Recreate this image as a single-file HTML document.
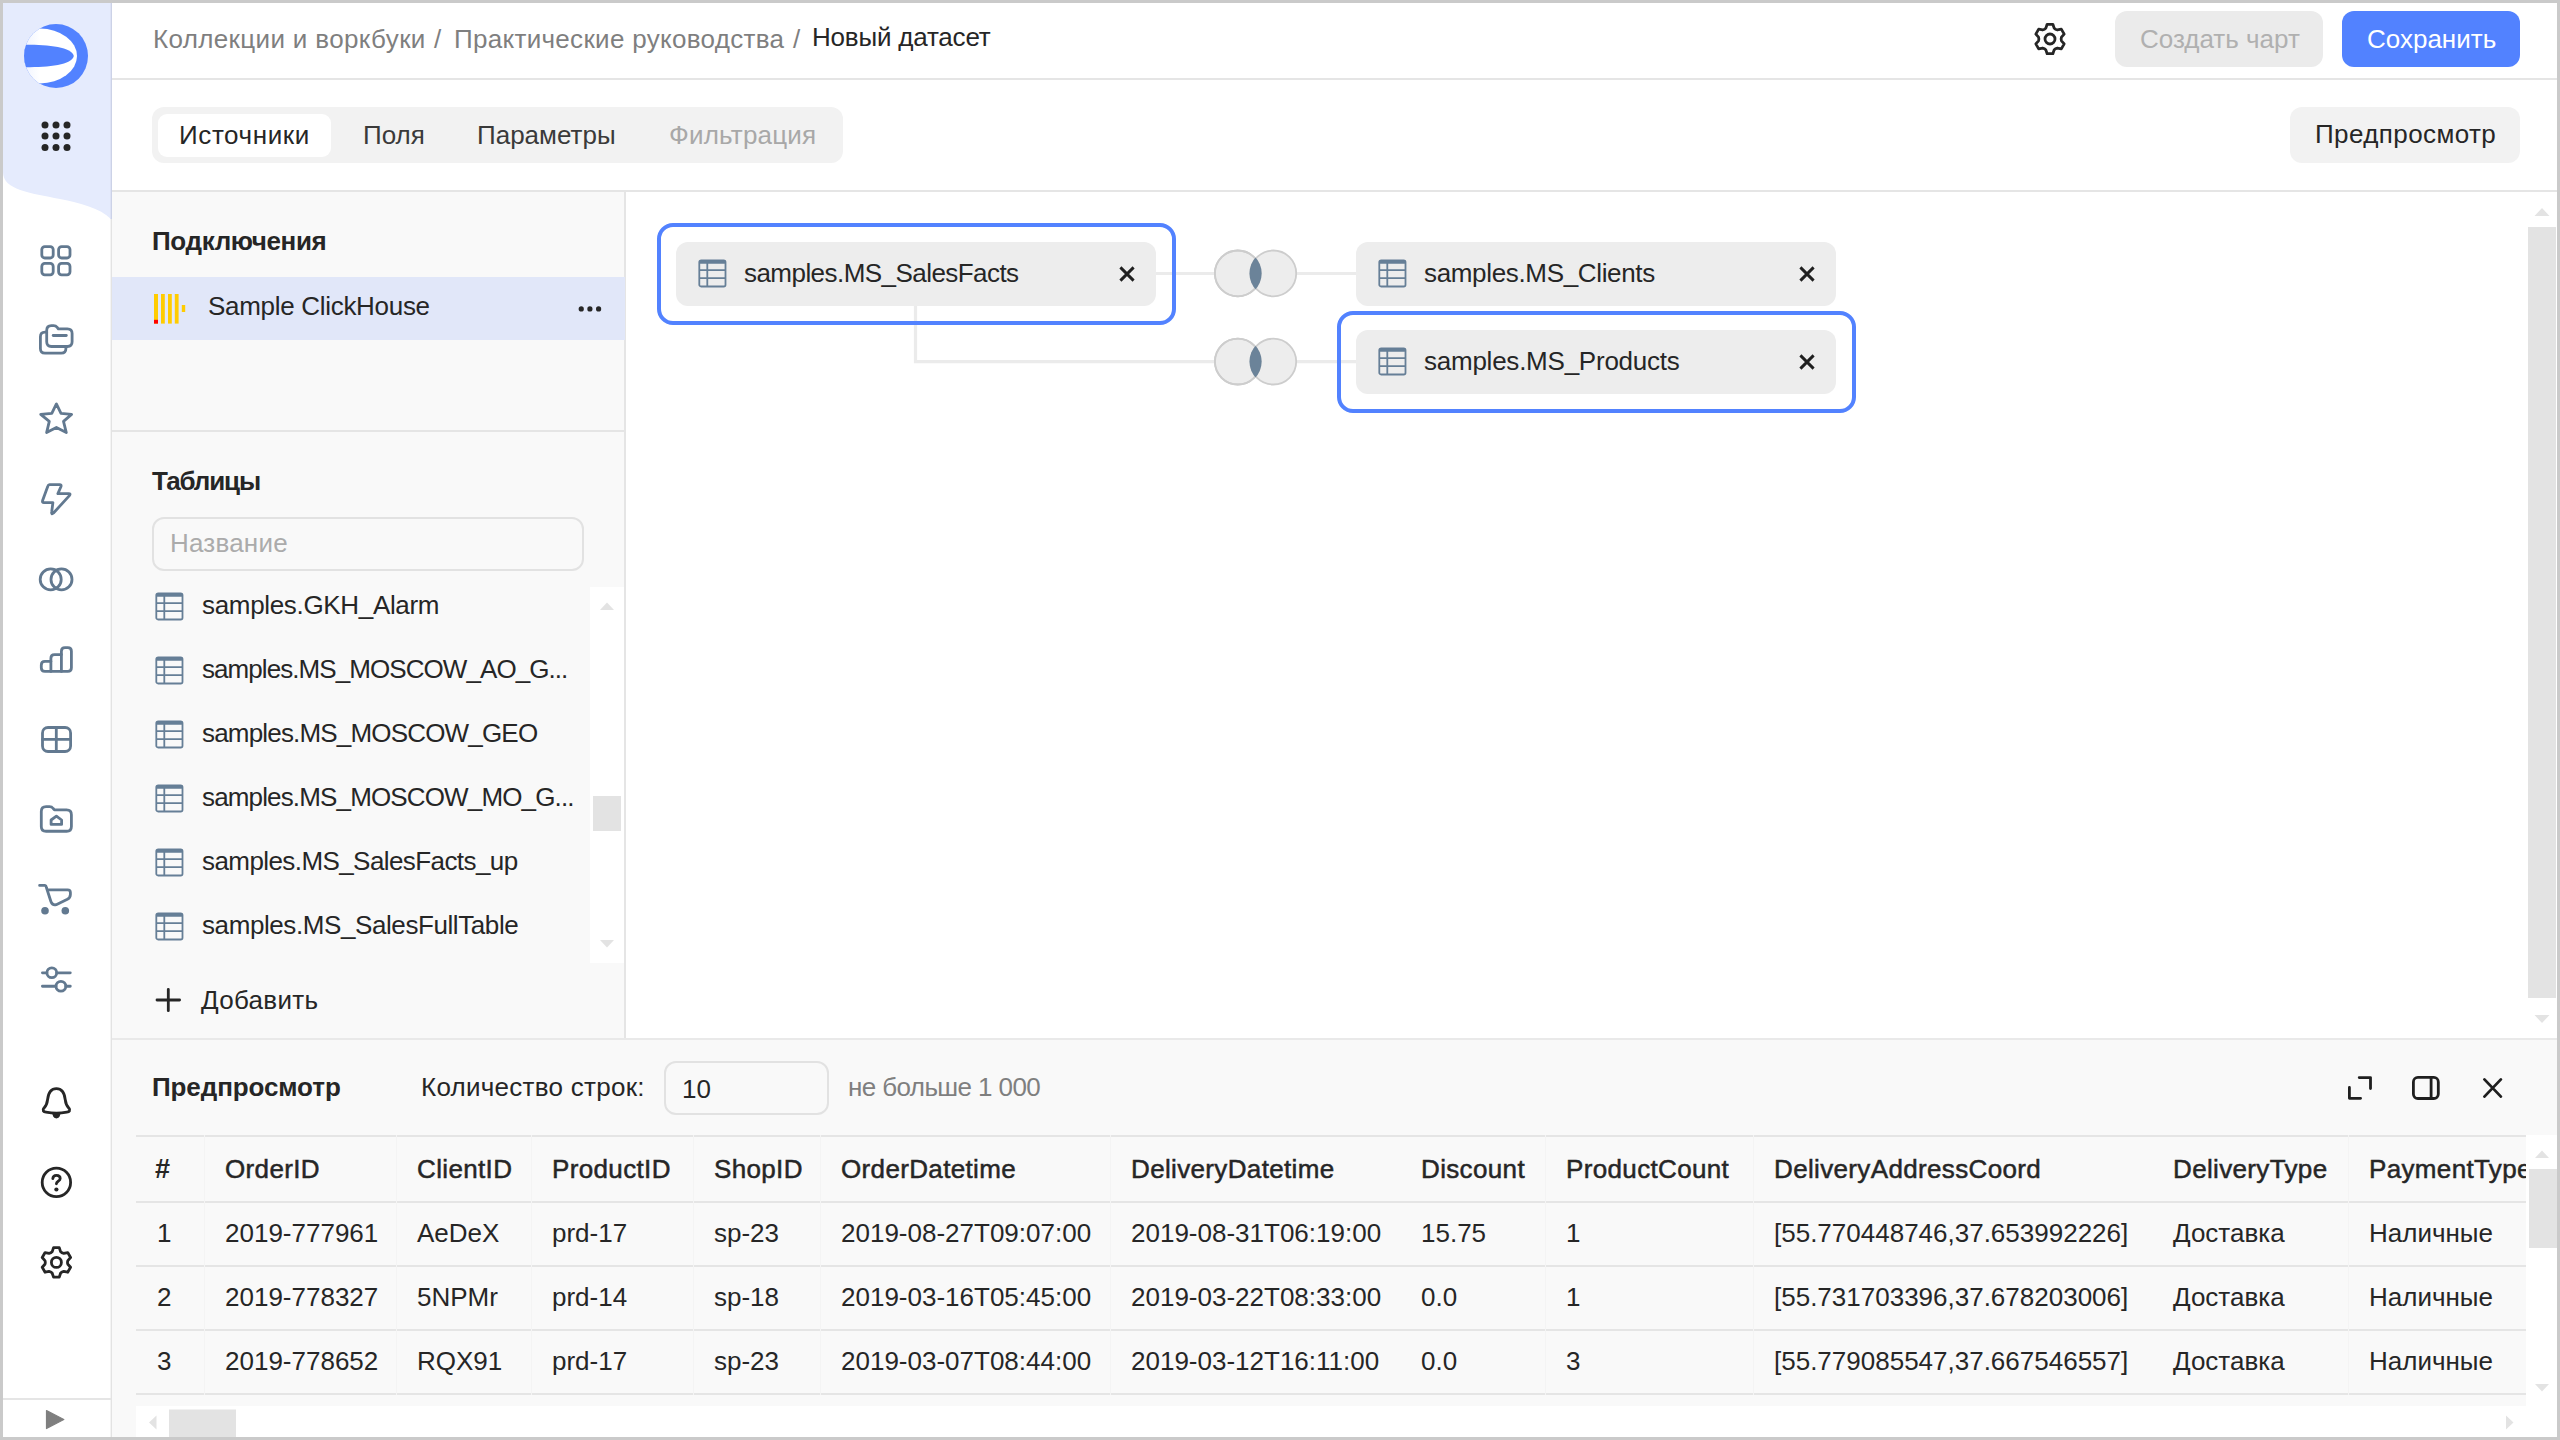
<!DOCTYPE html>
<html><head><meta charset="utf-8">
<style>
*{box-sizing:border-box;margin:0;padding:0}
html,body{width:2560px;height:1440px;overflow:hidden;background:#fff}
body{font-family:"Liberation Sans",sans-serif;font-size:26px;color:#262626;position:relative}
.a{position:absolute}
.t{position:absolute;white-space:nowrap;line-height:36px;height:36px}
.frame{position:absolute;left:0;top:0;width:2560px;height:1440px;border:3px solid #cacaca;z-index:100;pointer-events:none}
.hl{position:absolute;height:2px;background:#e8e8e8}
.vl{position:absolute;width:2px;background:#e8e8e8}
.ico{position:absolute}
.b{font-weight:bold}
.sec{color:#7f7f7f}
.th{-webkit-text-stroke:0.5px #262626;letter-spacing:0.35px}
</style></head><body>
<div class="frame"></div>
<!-- SIDEBAR -->
<svg class="a" style="left:0;top:0" width="112" height="1440" viewBox="0 0 112 1440">
  <defs>
    <clipPath id="lc"><circle cx="56" cy="56" r="32"/></clipPath>
    <linearGradient id="lg" x1="0" x2="1" y1="0" y2="0">
      <stop offset="0" stop-color="#dbe4fd"/><stop offset="0.5" stop-color="#ffffff"/>
    </linearGradient>
  </defs>
  <path d="M3 3 H111 V219 C 100 208, 80 203, 60 199 C 30 193, 3 190, 3 172 Z" fill="#e5ebfd"/>
  <circle cx="56" cy="56" r="32" fill="#5282ff"/>
  <g clip-path="url(#lc)">
    <ellipse cx="40" cy="56" rx="37" ry="27.4" fill="url(#lg)"/>
    <path d="M20 44.8 C 45 44.4, 72 46.5, 73.8 56 C 72 65.5, 45 67.6, 20 67.2 Z" fill="#5282ff"/>
  </g>
  <g fill="#262626">
    <circle cx="45" cy="125" r="3.5"/><circle cx="56" cy="125" r="3.5"/><circle cx="67" cy="125" r="3.5"/>
    <circle cx="45" cy="136" r="3.5"/><circle cx="56" cy="136" r="3.5"/><circle cx="67" cy="136" r="3.5"/>
    <circle cx="45" cy="147.5" r="3.5"/><circle cx="56" cy="147.5" r="3.5"/><circle cx="67" cy="147.5" r="3.5"/>
  </g>
  <g fill="none" stroke="#627990" stroke-width="2.8" stroke-linecap="round" stroke-linejoin="round">
    <!-- dashboards grid -->
    <rect x="41.8" y="246.6" width="11.4" height="11.4" rx="3"/>
    <rect x="58.6" y="246.6" width="11.4" height="11.4" rx="3"/>
    <rect x="41.8" y="263.4" width="11.4" height="11.4" rx="3"/>
    <rect x="58.6" y="263.4" width="11.4" height="11.4" rx="3"/>
    <!-- collections -->
    <path d="M46.7 330.5 Q46.7 325.6 51.3 325.6 H53.6 Q55.8 325.6 57.2 327.4 L58.3 328.8 H67.4 Q72.1 328.8 72.1 333.4 V341.8 Q72.1 346.5 67.4 346.5 H51.4 Q46.7 346.5 46.7 341.8 Z"/>
    <path d="M53.2 335.5 H66.3"/>
    <path d="M46.7 332.2 H45 Q40.4 332.2 40.4 336.8 V348.6 Q40.4 353.2 45 353.2 H61.3 Q65.9 353.2 65.9 348.6 V346.5"/>
    <!-- star -->
    <path d="M56.4 403.9 L51.8 413.3 L40.7 414.4 L49.3 421.4 L46.6 432.6 L56.4 427.5 L66.3 432.6 L63.5 421.4 L71.6 414.4 L61 413.3 Z"/>
    <!-- lightning -->
    <path d="M49.5 484.6 H59.6 Q61.6 484.6 61 486.5 L57.9 493.6 H68.6 Q71 493.6 69.4 495.6 L53.5 513 Q51.2 515 51.7 512 L52.9 502.6 H44 Q42 502.6 42.6 500.6 L47.8 486.2 Q48.3 484.6 49.5 484.6 Z"/>
    <!-- two circles -->
    <circle cx="50.7" cy="579.4" r="10.5"/>
    <circle cx="61.5" cy="579.4" r="10.5"/>
    <!-- bars -->
    <path d="M41.3 665 Q41.3 661.4 44.9 661.4 H50.9 V658.2 Q50.9 654.6 54.5 654.6 H61.4 V651.2 Q61.4 647.6 65 647.6 H67.8 Q71.4 647.6 71.4 651.2 V667.8 Q71.4 671.4 67.8 671.4 H44.9 Q41.3 671.4 41.3 667.8 Z"/>
    <path d="M50.9 661.4 V671.4 M61.4 654.6 V671.4"/>
    <!-- grid cross -->
    <rect x="42.5" y="727.5" width="28.1" height="24" rx="5.5"/>
    <path d="M56.3 727.5 V751.5 M42.5 739.4 H70.6"/>
    <!-- folder home -->
    <path d="M41.3 811.5 Q41.3 806.7 46.1 806.7 H49.5 Q51.8 806.7 53.2 808.5 L54.4 809.9 H66.6 Q71.4 809.9 71.4 814.7 V826.4 Q71.4 831.25 66.6 831.25 H46.1 Q41.3 831.25 41.3 826.4 Z"/>
    <path d="M56.4 816.1 L51.1 820 V824.4 H61.6 V820 Z"/>
    <!-- cart -->
    <path d="M39.6 885.4 H44.6 Q45.9 885.4 46.4 887.5 L50.9 901.5 Q52.5 905.8 56.2 904.7 L66.9 899.6 Q70.4 897.8 70.4 894.5 V892.4 Q70.4 889.9 67.6 889.9 H47.4"/>
    <!-- sliders -->
    <path d="M42.4 972.8 H46.9 M56.7 972.8 H70.3 M42.4 986.25 H56 M65.8 986.25 H70.3"/>
    <circle cx="51.8" cy="972.8" r="4.9"/>
    <circle cx="60.9" cy="986.25" r="4.9"/>
  </g>
  <g fill="#627990"><circle cx="45" cy="910.8" r="3.8"/><circle cx="65.3" cy="910.8" r="3.8"/></g>
  <g fill="none" stroke="#262626" stroke-width="2.8" stroke-linecap="round" stroke-linejoin="round">
    <!-- bell -->
    <path d="M56.4 1088.7 C 50 1088.7 48.2 1094 47.6 1099.5 C 47 1105 45.5 1106.5 43.8 1108.3 C 42 1110.3 43.5 1111.9 46 1112.2 C 52 1113.2 60.8 1113.2 66.8 1112.2 C 69.3 1111.9 70.8 1110.3 69 1108.3 C 67.3 1106.5 65.8 1105 65.2 1099.5 C 64.6 1094 62.8 1088.7 56.4 1088.7 Z"/>
    <!-- help -->
    <circle cx="56.4" cy="1182.4" r="14.2"/>
    <path d="M52.8 1178.6 C 53 1176.4 54.6 1175.3 56.4 1175.3 C 58.6 1175.3 60.2 1176.6 60.2 1178.4 C 60.2 1181 56.4 1181.2 56.4 1183.8"/>
    <!-- gear -->
    <path transform="translate(56.4 1262.4)" d="M-4.16 -10.83 L-2.86 -14.72 L2.86 -14.72 L4.16 -10.83 A 5.00 5.00 0 0 0 7.30 -9.01 L11.32 -9.84 L14.18 -4.88 L11.46 -1.81 A 5.00 5.00 0 0 0 11.46 1.81 L14.18 4.88 L11.32 9.84 L7.30 9.01 A 5.00 5.00 0 0 0 4.16 10.83 L2.86 14.72 L-2.86 14.72 L-4.16 10.83 A 5.00 5.00 0 0 0 -7.30 9.01 L-11.32 9.84 L-14.18 4.88 L-11.46 1.81 A 5.00 5.00 0 0 0 -11.46 -1.81 L-14.18 -4.88 L-11.32 -9.84 L-7.30 -9.01 A 5.00 5.00 0 0 0 -4.16 -10.83 Z"/>
    <circle cx="56.4" cy="1262.4" r="5"/>
  </g>
  <g fill="#262626">
    <path d="M51.8 1112.4 H61 L59.6 1116.6 Q59 1118.4 56.4 1118.4 Q53.8 1118.4 53.2 1116.6 Z"/>
    <circle cx="56.4" cy="1189.5" r="2.1"/>
  </g>
  <path d="M46.5 1410.5 L63.8 1419.5 L46.5 1428.5 Z" fill="#7f7f7f" stroke="#7f7f7f" stroke-width="1.2" stroke-linejoin="round"/>
</svg>
<div class="a" style="left:110px;top:3px;width:1px;height:216px;background:#dde2f5"></div>
<div class="a" style="left:111px;top:3px;width:1px;height:216px;background:#ccd2e7"></div>
<div class="a" style="left:110px;top:219px;width:1px;height:1218px;background:#f4f4f4"></div>
<div class="a" style="left:111px;top:219px;width:1px;height:1218px;background:#e3e3e3"></div>
<div class="a" style="left:3px;top:1398px;width:108px;height:2px;background:#e5e5e5"></div>

<!-- HEADER -->
<div class="a" style="left:112px;top:78px;width:2445px;height:2px;background:#e5e5e5"></div>
<div class="t sec" style="left:153px;top:21px;letter-spacing:0.35px">Коллекции и воркбуки</div>
<div class="t sec" style="left:434px;top:21px">/</div>
<div class="t sec" style="left:454px;top:21px;letter-spacing:0.3px">Практические руководства</div>
<div class="t sec" style="left:793px;top:21px">/</div>
<div class="t" style="left:812px;top:19px;letter-spacing:-0.2px">Новый датасет</div>
<svg class="a" style="left:2030px;top:19px" width="40" height="40" viewBox="-20 -20 40 40">
  <g fill="none" stroke="#262626" stroke-width="2.8" stroke-linejoin="round">
    <path d="M-4.16 -10.83 L-2.86 -14.72 L2.86 -14.72 L4.16 -10.83 A 5.00 5.00 0 0 0 7.30 -9.01 L11.32 -9.84 L14.18 -4.88 L11.46 -1.81 A 5.00 5.00 0 0 0 11.46 1.81 L14.18 4.88 L11.32 9.84 L7.30 9.01 A 5.00 5.00 0 0 0 4.16 10.83 L2.86 14.72 L-2.86 14.72 L-4.16 10.83 A 5.00 5.00 0 0 0 -7.30 9.01 L-11.32 9.84 L-14.18 4.88 L-11.46 1.81 A 5.00 5.00 0 0 0 -11.46 -1.81 L-14.18 -4.88 L-11.32 -9.84 L-7.30 -9.01 A 5.00 5.00 0 0 0 -4.16 -10.83 Z"/>
    <circle cx="0" cy="0" r="5"/>
  </g>
</svg>
<div class="a" style="left:2115px;top:11px;width:208px;height:56px;border-radius:12px;background:#ebebeb"></div>
<div class="t" style="left:2140px;top:21px;color:#b0b0b0">Создать чарт</div>
<div class="a" style="left:2342px;top:11px;width:178px;height:56px;border-radius:12px;background:#5282ff"></div>
<div class="t" style="left:2367px;top:21px;color:#fff">Сохранить</div>

<!-- TABS -->
<div class="a" style="left:112px;top:190px;width:2445px;height:2px;background:#e5e5e5"></div>
<div class="a" style="left:152px;top:107px;width:691px;height:56px;border-radius:12px;background:#f2f2f2"></div>
<div class="a" style="left:158px;top:114px;width:173px;height:43px;border-radius:9px;background:#fff"></div>
<div class="t" style="left:179px;top:117px;letter-spacing:0.6px">Источники</div>
<div class="t" style="left:363px;top:117px;color:#3a3a3a">Поля</div>
<div class="t" style="left:477px;top:117px;color:#3a3a3a">Параметры</div>
<div class="t" style="left:669px;top:117px;color:#a8a8a8;letter-spacing:0.2px">Фильтрация</div>
<div class="a" style="left:2290px;top:107px;width:230px;height:56px;border-radius:12px;background:#f2f2f2"></div>
<div class="t" style="left:2315px;top:116px;letter-spacing:0.4px">Предпросмотр</div>

<!-- LEFT PANEL -->
<div class="a" style="left:112px;top:192px;width:513px;height:847px;background:#f9f9f9"></div>
<div class="a" style="left:624px;top:192px;width:2px;height:847px;background:#e5e5e5"></div>
<div class="t b" style="left:152px;top:223px;letter-spacing:-0.35px">Подключения</div>
<div class="a" style="left:112px;top:277px;width:513px;height:63px;background:#e1e7f9"></div>
<svg class="a" style="left:146px;top:286px" width="50" height="44" viewBox="146 286 50 44">
  <g fill="#ffcc00"><rect x="154" y="294" width="4" height="29.6"/><rect x="161" y="294" width="3.8" height="29.6"/><rect x="168" y="294" width="3.8" height="29.6"/><rect x="174.8" y="294" width="3.8" height="29.6"/><rect x="181.8" y="305" width="3.4" height="7"/></g>
  <rect x="154" y="319.8" width="4" height="3.8" fill="#ff0000"/>
</svg>
<div class="t" style="left:208px;top:288px;letter-spacing:-0.3px">Sample ClickHouse</div>
<svg class="a" style="left:570px;top:298px" width="40" height="22" viewBox="570 298 40 22">
  <g fill="#262626"><circle cx="581.25" cy="308.9" r="2.6"/><circle cx="589.9" cy="308.9" r="2.6"/><circle cx="598.6" cy="308.9" r="2.6"/></g>
</svg>
<div class="a" style="left:112px;top:430px;width:513px;height:2px;background:#e5e5e5"></div>
<div class="t b" style="left:152px;top:463px;letter-spacing:-1.1px">Таблицы</div>
<div class="a" style="left:152px;top:517px;width:432px;height:54px;border-radius:12px;border:2px solid #e2e2e2;background:#f9f9f9"></div>
<div class="t" style="left:170px;top:525px;color:#ababab;letter-spacing:0.2px">Название</div>

<!-- TABLE LIST -->
<div class="a" style="left:590px;top:587px;width:34px;height:376px;background:#fff"></div>
<div class="a" style="left:593px;top:796px;width:28px;height:35px;background:#e3e3e3"></div>
<svg class="a" style="left:590px;top:587px" width="35" height="376" viewBox="590 587 35 376"><path d="M600 610 L607 602.5 L614 610 Z M600 940 L607 947.5 L614 940 Z" fill="#e3e3e3"/></svg>
<svg class="a" style="left:155px;top:592px" width="29" height="29" viewBox="0 0 29 29"><g fill="none" stroke="#667f97" stroke-width="1.8"><rect x="1.3" y="1.3" width="26.2" height="26.2" rx="1.8"/><path d="M2 11.2 H27 M2 19.2 H27 M9.3 4 V27"/></g><rect x="1.3" y="1.3" width="26.2" height="3.4" rx="1" fill="#667f97"/></svg>
<div class="t" style="left:202px;top:587px;letter-spacing:-0.33px">samples.GKH_Alarm</div>
<svg class="a" style="left:155px;top:656px" width="29" height="29" viewBox="0 0 29 29"><g fill="none" stroke="#667f97" stroke-width="1.8"><rect x="1.3" y="1.3" width="26.2" height="26.2" rx="1.8"/><path d="M2 11.2 H27 M2 19.2 H27 M9.3 4 V27"/></g><rect x="1.3" y="1.3" width="26.2" height="3.4" rx="1" fill="#667f97"/></svg>
<div class="t" style="left:202px;top:651px;letter-spacing:-0.93px">samples.MS_MOSCOW_AO_G...</div>
<svg class="a" style="left:155px;top:720px" width="29" height="29" viewBox="0 0 29 29"><g fill="none" stroke="#667f97" stroke-width="1.8"><rect x="1.3" y="1.3" width="26.2" height="26.2" rx="1.8"/><path d="M2 11.2 H27 M2 19.2 H27 M9.3 4 V27"/></g><rect x="1.3" y="1.3" width="26.2" height="3.4" rx="1" fill="#667f97"/></svg>
<div class="t" style="left:202px;top:715px;letter-spacing:-0.82px">samples.MS_MOSCOW_GEO</div>
<svg class="a" style="left:155px;top:784px" width="29" height="29" viewBox="0 0 29 29"><g fill="none" stroke="#667f97" stroke-width="1.8"><rect x="1.3" y="1.3" width="26.2" height="26.2" rx="1.8"/><path d="M2 11.2 H27 M2 19.2 H27 M9.3 4 V27"/></g><rect x="1.3" y="1.3" width="26.2" height="3.4" rx="1" fill="#667f97"/></svg>
<div class="t" style="left:202px;top:779px;letter-spacing:-0.85px">samples.MS_MOSCOW_MO_G...</div>
<svg class="a" style="left:155px;top:848px" width="29" height="29" viewBox="0 0 29 29"><g fill="none" stroke="#667f97" stroke-width="1.8"><rect x="1.3" y="1.3" width="26.2" height="26.2" rx="1.8"/><path d="M2 11.2 H27 M2 19.2 H27 M9.3 4 V27"/></g><rect x="1.3" y="1.3" width="26.2" height="3.4" rx="1" fill="#667f97"/></svg>
<div class="t" style="left:202px;top:843px;letter-spacing:-0.58px">samples.MS_SalesFacts_up</div>
<svg class="a" style="left:155px;top:912px" width="29" height="29" viewBox="0 0 29 29"><g fill="none" stroke="#667f97" stroke-width="1.8"><rect x="1.3" y="1.3" width="26.2" height="26.2" rx="1.8"/><path d="M2 11.2 H27 M2 19.2 H27 M9.3 4 V27"/></g><rect x="1.3" y="1.3" width="26.2" height="3.4" rx="1" fill="#667f97"/></svg>
<div class="t" style="left:202px;top:907px;letter-spacing:-0.41px">samples.MS_SalesFullTable</div>
<svg class="a" style="left:150px;top:982px" width="36" height="36" viewBox="150 982 36 36"><path d="M168.3 989.3 V1010.7 M157 1000 H179.6" stroke="#262626" stroke-width="2.8" fill="none" stroke-linecap="round"/></svg>
<div class="t" style="left:201px;top:982px;letter-spacing:0.3px">Добавить</div>
<!-- CANVAS -->
<div class="a" style="left:657px;top:223px;width:519px;height:102px;border-radius:16px;background:#fff"></div>
<div class="a" style="left:1337px;top:311px;width:519px;height:102px;border-radius:16px;background:#fff"></div>
<svg class="a" style="left:627px;top:192px" width="1930" height="847" viewBox="627 192 1930 847"><g stroke="#ebebeb" stroke-width="3.2" fill="none"><path d="M1150 273.5 H1360"/><path d="M915.5 300 V361.6 H1360"/></g><defs><clipPath id="c1"><circle cx="1237.8" cy="273.4" r="23.8"/></clipPath><clipPath id="c2"><circle cx="1237.8" cy="361.6" r="23.8"/></clipPath></defs><g fill="#ededed" stroke="#cdcdcd" stroke-width="1.8"><circle cx="1237.8" cy="273.4" r="22.9"/><circle cx="1273.3" cy="273.4" r="22.9"/><circle cx="1237.8" cy="361.6" r="22.9"/><circle cx="1273.3" cy="361.6" r="22.9"/></g><g fill="none" stroke="#cdcdcd" stroke-width="1.8"><circle cx="1237.8" cy="273.4" r="22.9"/><circle cx="1237.8" cy="361.6" r="22.9"/></g><circle cx="1273.3" cy="273.4" r="23.8" fill="#6b8399" clip-path="url(#c1)"/><circle cx="1273.3" cy="361.6" r="23.8" fill="#6b8399" clip-path="url(#c2)"/></svg>
<div class="a" style="left:657px;top:223px;width:519px;height:102px;border:4.5px solid #5282ff;border-radius:16px"></div>
<div class="a" style="left:1337px;top:311px;width:519px;height:102px;border:4.5px solid #5282ff;border-radius:16px"></div>
<div class="a" style="left:676px;top:242px;width:480px;height:64px;border-radius:12px;background:#ededed"></div>
<svg class="a" style="left:698px;top:259px" width="29" height="29" viewBox="0 0 29 29"><g fill="none" stroke="#667f97" stroke-width="1.8"><rect x="1.3" y="1.3" width="26.2" height="26.2" rx="1.8"/><path d="M2 11.2 H27 M2 19.2 H27 M9.3 4 V27"/></g><rect x="1.3" y="1.3" width="26.2" height="3.4" rx="1" fill="#667f97"/></svg>
<div class="t" style="left:744px;top:255px;letter-spacing:-0.55px">samples.MS_SalesFacts</div>
<svg class="a" style="left:1117px;top:264px" width="20" height="20" viewBox="-10 -10 20 20"><path d="M-6.6 -6.6 L6.6 6.6 M6.6 -6.6 L-6.6 6.6" stroke="#1f1f1f" stroke-width="2.9" fill="none"/></svg>
<div class="a" style="left:1356px;top:242px;width:480px;height:64px;border-radius:12px;background:#ededed"></div>
<svg class="a" style="left:1378px;top:259px" width="29" height="29" viewBox="0 0 29 29"><g fill="none" stroke="#667f97" stroke-width="1.8"><rect x="1.3" y="1.3" width="26.2" height="26.2" rx="1.8"/><path d="M2 11.2 H27 M2 19.2 H27 M9.3 4 V27"/></g><rect x="1.3" y="1.3" width="26.2" height="3.4" rx="1" fill="#667f97"/></svg>
<div class="t" style="left:1424px;top:255px;letter-spacing:-0.34px">samples.MS_Clients</div>
<svg class="a" style="left:1797px;top:264px" width="20" height="20" viewBox="-10 -10 20 20"><path d="M-6.6 -6.6 L6.6 6.6 M6.6 -6.6 L-6.6 6.6" stroke="#1f1f1f" stroke-width="2.9" fill="none"/></svg>
<div class="a" style="left:1356px;top:330px;width:480px;height:64px;border-radius:12px;background:#ededed"></div>
<svg class="a" style="left:1378px;top:347px" width="29" height="29" viewBox="0 0 29 29"><g fill="none" stroke="#667f97" stroke-width="1.8"><rect x="1.3" y="1.3" width="26.2" height="26.2" rx="1.8"/><path d="M2 11.2 H27 M2 19.2 H27 M9.3 4 V27"/></g><rect x="1.3" y="1.3" width="26.2" height="3.4" rx="1" fill="#667f97"/></svg>
<div class="t" style="left:1424px;top:343px;letter-spacing:-0.24px">samples.MS_Products</div>
<svg class="a" style="left:1797px;top:352px" width="20" height="20" viewBox="-10 -10 20 20"><path d="M-6.6 -6.6 L6.6 6.6 M6.6 -6.6 L-6.6 6.6" stroke="#1f1f1f" stroke-width="2.9" fill="none"/></svg>
<svg class="a" style="left:2526px;top:192px" width="31" height="847" viewBox="2526 192 31 847"><rect x="2528" y="227" width="28" height="771" fill="#e3e3e3"/><path d="M2534.5 216 L2542 208 L2549.5 216 Z M2534.5 1015 L2542 1023 L2549.5 1015 Z" fill="#e3e3e3"/></svg>
<!-- PREVIEW -->
<div class="a" style="left:112px;top:1038px;width:2445px;height:399px;background:#f9f9f9"></div>
<div class="a" style="left:112px;top:1038px;width:2445px;height:2px;background:#e9e9e9"></div>
<div class="t b" style="left:152px;top:1069px;letter-spacing:-0.1px">Предпросмотр</div>
<div class="t" style="left:421px;top:1069px;letter-spacing:0.27px">Количество строк:</div>
<div class="a" style="left:664px;top:1061px;width:165px;height:54px;border-radius:12px;border:2px solid #e2e2e2;background:#f9f9f9"></div>
<div class="t" style="left:682px;top:1071px">10</div>
<div class="t sec" style="left:848px;top:1069px;letter-spacing:-0.6px">не больше 1 000</div>
<svg class="a" style="left:2336px;top:1066px" width="180" height="44" viewBox="2336 1066 180 44"><g fill="none" stroke="#1f1f1f" stroke-width="2.8" stroke-linecap="round" stroke-linejoin="round"><path d="M2359.2 1077.6 H2370.5 V1088.5 M2349.4 1087.4 V1098.3 H2360.6"/><rect x="2413.4" y="1077.4" width="24.9" height="21.1" rx="4.5"/><path d="M2431.1 1077.4 V1098.5"/><path d="M2484.4 1079.4 L2500.9 1096.6 M2500.9 1079.4 L2484.4 1096.6"/></g></svg>
<div class="a" style="left:136px;top:1135px;width:2390px;height:271px;overflow:hidden">
<div class="a" style="left:0;top:0px;width:2390px;height:2px;background:#e5e5e5"></div>
<div class="a" style="left:0;top:66px;width:2390px;height:2px;background:#e5e5e5"></div>
<div class="a" style="left:0;top:130px;width:2390px;height:2px;background:#e5e5e5"></div>
<div class="a" style="left:0;top:194px;width:2390px;height:2px;background:#e5e5e5"></div>
<div class="a" style="left:0;top:258px;width:2390px;height:2px;background:#e5e5e5"></div>
<div class="a" style="left:68px;top:0;width:1px;height:260px;background:#f4f4f4"></div>
<div class="a" style="left:260px;top:0;width:1px;height:260px;background:#f4f4f4"></div>
<div class="a" style="left:395px;top:0;width:1px;height:260px;background:#f4f4f4"></div>
<div class="a" style="left:557px;top:0;width:1px;height:260px;background:#f4f4f4"></div>
<div class="a" style="left:684px;top:0;width:1px;height:260px;background:#f4f4f4"></div>
<div class="a" style="left:974px;top:0;width:1px;height:260px;background:#f4f4f4"></div>
<div class="a" style="left:1409px;top:0;width:1px;height:260px;background:#f4f4f4"></div>
<div class="a" style="left:1617px;top:0;width:1px;height:260px;background:#f4f4f4"></div>
<div class="a" style="left:2212px;top:0;width:1px;height:260px;background:#f4f4f4"></div>
<div class="t" style="left:19px;top:16px;font-weight:bold;font-size:27px">#</div>
<div class="t th" style="left:89px;top:16px">OrderID</div>
<div class="t th" style="left:281px;top:16px">ClientID</div>
<div class="t th" style="left:416px;top:16px">ProductID</div>
<div class="t th" style="left:578px;top:16px">ShopID</div>
<div class="t th" style="left:705px;top:16px">OrderDatetime</div>
<div class="t th" style="left:995px;top:16px">DeliveryDatetime</div>
<div class="t th" style="left:1285px;top:16px">Discount</div>
<div class="t th" style="left:1430px;top:16px">ProductCount</div>
<div class="t th" style="left:1638px;top:16px">DeliveryAddressCoord</div>
<div class="t th" style="left:2037px;top:16px">DeliveryType</div>
<div class="t th" style="left:2233px;top:16px">PaymentType</div>
<div class="t" style="left:21px;top:80px">1</div>
<div class="t" style="left:89px;top:80px">2019-777961</div>
<div class="t" style="left:281px;top:80px">AeDeX</div>
<div class="t" style="left:416px;top:80px">prd-17</div>
<div class="t" style="left:578px;top:80px">sp-23</div>
<div class="t" style="left:705px;top:80px">2019-08-27T09:07:00</div>
<div class="t" style="left:995px;top:80px">2019-08-31T06:19:00</div>
<div class="t" style="left:1285px;top:80px">15.75</div>
<div class="t" style="left:1430px;top:80px">1</div>
<div class="t" style="left:1638px;top:80px">[55.770448746,37.653992226]</div>
<div class="t" style="left:2037px;top:80px">Доставка</div>
<div class="t" style="left:2233px;top:80px">Наличные</div>
<div class="t" style="left:21px;top:144px">2</div>
<div class="t" style="left:89px;top:144px">2019-778327</div>
<div class="t" style="left:281px;top:144px">5NPMr</div>
<div class="t" style="left:416px;top:144px">prd-14</div>
<div class="t" style="left:578px;top:144px">sp-18</div>
<div class="t" style="left:705px;top:144px">2019-03-16T05:45:00</div>
<div class="t" style="left:995px;top:144px">2019-03-22T08:33:00</div>
<div class="t" style="left:1285px;top:144px">0.0</div>
<div class="t" style="left:1430px;top:144px">1</div>
<div class="t" style="left:1638px;top:144px">[55.731703396,37.678203006]</div>
<div class="t" style="left:2037px;top:144px">Доставка</div>
<div class="t" style="left:2233px;top:144px">Наличные</div>
<div class="t" style="left:21px;top:208px">3</div>
<div class="t" style="left:89px;top:208px">2019-778652</div>
<div class="t" style="left:281px;top:208px">RQX91</div>
<div class="t" style="left:416px;top:208px">prd-17</div>
<div class="t" style="left:578px;top:208px">sp-23</div>
<div class="t" style="left:705px;top:208px">2019-03-07T08:44:00</div>
<div class="t" style="left:995px;top:208px">2019-03-12T16:11:00</div>
<div class="t" style="left:1285px;top:208px">0.0</div>
<div class="t" style="left:1430px;top:208px">3</div>
<div class="t" style="left:1638px;top:208px">[55.779085547,37.667546557]</div>
<div class="t" style="left:2037px;top:208px">Доставка</div>
<div class="t" style="left:2233px;top:208px">Наличные</div>
</div>
<svg class="a" style="left:2526px;top:1135px" width="31" height="302" viewBox="2526 1135 31 302"><rect x="2526" y="1135" width="31" height="302" fill="#fff"/><rect x="2529" y="1169" width="28" height="79" fill="#e3e3e3"/><path d="M2535 1158 L2542 1150.5 L2549 1158 Z M2535 1384 L2542 1391.5 L2549 1384 Z" fill="#e3e3e3"/></svg>
<svg class="a" style="left:136px;top:1406px" width="2390" height="31" viewBox="136 1406 2390 31"><rect x="136" y="1406" width="2390" height="31" fill="#fff"/><rect x="169" y="1409.5" width="67" height="27.5" fill="#e3e3e3"/><path d="M156.5 1415.5 L149 1422.5 L156.5 1429.5 Z M2506 1415.5 L2513.5 1422.5 L2506 1429.5 Z" fill="#e3e3e3"/></svg>
</body></html>
